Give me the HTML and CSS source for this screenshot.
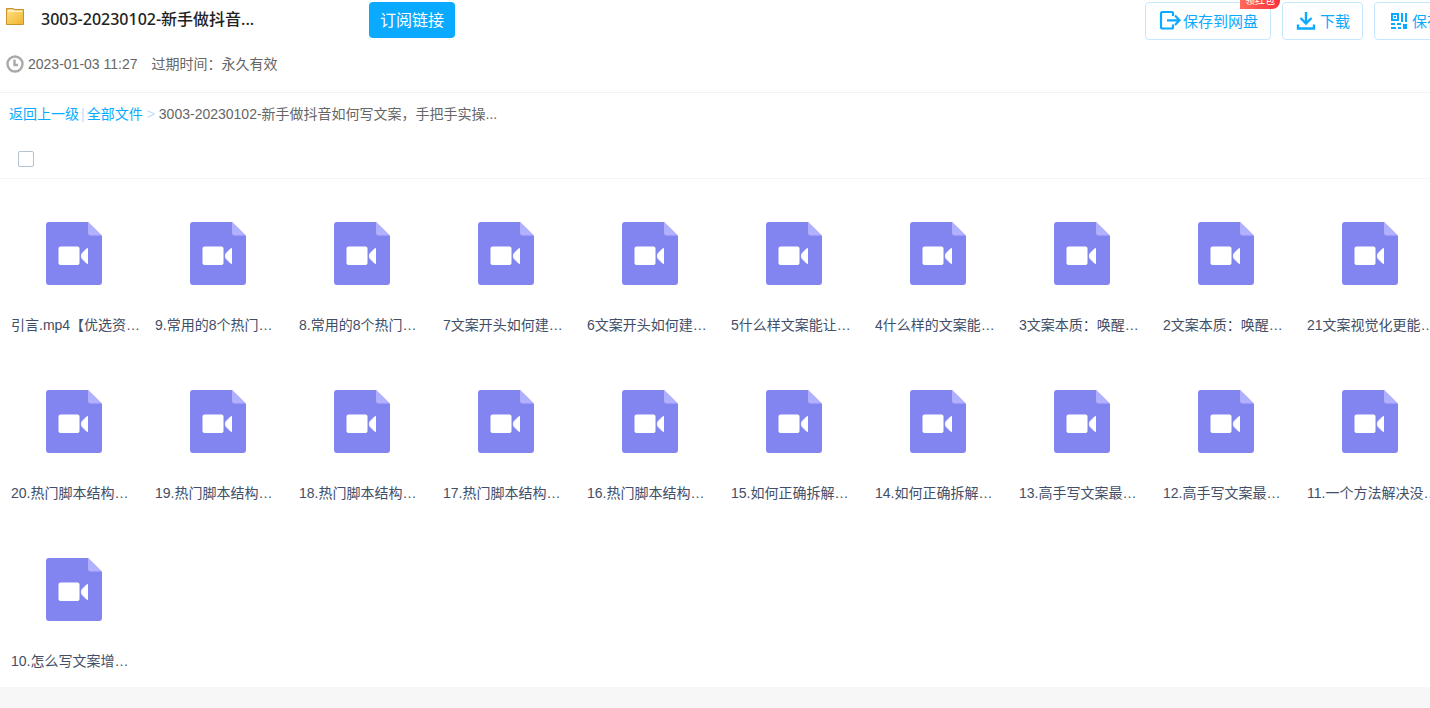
FILE: index.html
```html
<!DOCTYPE html>
<html lang="zh-CN">
<head>
<meta charset="utf-8">
<title>3003-20230102-新手做抖音</title>
<link rel="stylesheet" href="styles.css">
</head>
<body>
<svg class="defs" aria-hidden="true">
  <symbol id="video" viewBox="0 0 56 63">
    <path fill="#8284f0" d="M3 0H42L56 14V60Q56 63 53 63H3Q0 63 0 60V3Q0 0 3 0Z"/>
    <path fill="#b1b1ff" d="M42 0L56 13.500H45Q42 13.500 42 10.500Z"/>
    <rect x="12.500" y="24.500" width="21" height="18.500" rx="2" fill="#fff"/>
    <path fill="#fff" d="M42 26V42Q41 42 40 41L36 37Q35 36 35 34T36 31L40 27Q41 26 42 26Z"/>
  </symbol>
</svg>
<div class="page">
  <header class="header">
    <svg class="folder" viewBox="0 0 18 18" aria-hidden="true">
      <defs><linearGradient id="gold" x2="1" y2="1"><stop stop-color="#ffdc78"/><stop offset="1" stop-color="#f0b532"/></linearGradient></defs>
      <path d="M.5.500H7.500L8.500 1.500H17.500V16.500H.5Z" fill="#e9b545" stroke="#c8932c"/>
      <path d="M1.500 1.500H7L8 2.500H16.500V4H1.500Z" fill="#fff0c0"/>
      <path d="M1 4H17V16H1Z" fill="url(#gold)"/>
    </svg>
    <h1 class="title">3003-20230102-新手做抖音...</h1>
    <button class="subscribe" type="button">订阅链接</button>
    <div class="toolbar">
      <button class="tool" type="button">
        <svg class="tool-icon" viewBox="0 0 20 20" fill="none" stroke="#09aaff" stroke-width="2.200" aria-hidden="true"><path d="M14 6V3.500Q14 2 12.500 2H3.500Q2 2 2 3.500V17Q2 18.500 3.500 18.500H12.500Q14 18.500 14 17V14.500M8 10.300H20M16 5.500L20.500 10.300L16 15"/></svg>
        保存到网盘<span class="badge">领红包</span></button>
      <button class="tool" type="button">
        <svg class="tool-icon" viewBox="0 0 20 20" fill="none" stroke="#09aaff" stroke-width="2.400" aria-hidden="true"><path d="M10 2V13M4.500 8L10 13.500L15.500 8M2 14.500V18.500H18V14.500"/></svg>
        下载</button>
      <button class="tool" type="button">
        <svg class="tool-icon" viewBox="0 0 20 20" fill="#09aaff" aria-hidden="true"><path fill-rule="evenodd" d="M3 3H11V11H3ZM5 5V9H9V5ZM6 6H8V8H6ZM13 3H15V12H13ZM17 3H19V12H17ZM3 13H7V15H3ZM9 13H13V15H9ZM15 14H19V19H15ZM3 17H8V19H3ZM10 17H13V19H10Z"/></svg>
        保存</button>
    </div>
  </header>

  <div class="meta">
    <svg class="clock" viewBox="0 0 18 18" fill="none" stroke="#aaa" stroke-width="2.400" aria-hidden="true"><circle cx="9" cy="9" r="7.500"/><path d="M8.500 4.500V10H12"/></svg>
    <time datetime="2023-01-03T11:27">2023-01-03 11:27</time>
    <span class="expiry">过期时间：永久有效</span>
  </div>

  <nav class="crumbs">
    <a href="#">返回上一级</a><span class="sep">|</span><a href="#">全部文件</a><span class="sep arrow">&gt;</span><span>3003-20230102-新手做抖音如何写文案，手把手实操...</span>
  </nav>

  <div class="select-row"><input class="check" type="checkbox" aria-label="全选"></div>

  <ul class="files">
    <li class="file"><svg class="thumb"><use href="#video"/></svg><a class="name" href="#">引言.mp4【优选资…</a></li>
    <li class="file"><svg class="thumb"><use href="#video"/></svg><a class="name" href="#">9.常用的8个热门…</a></li>
    <li class="file"><svg class="thumb"><use href="#video"/></svg><a class="name" href="#">8.常用的8个热门…</a></li>
    <li class="file"><svg class="thumb"><use href="#video"/></svg><a class="name" href="#">7文案开头如何建…</a></li>
    <li class="file"><svg class="thumb"><use href="#video"/></svg><a class="name" href="#">6文案开头如何建…</a></li>
    <li class="file"><svg class="thumb"><use href="#video"/></svg><a class="name" href="#">5什么样文案能让…</a></li>
    <li class="file"><svg class="thumb"><use href="#video"/></svg><a class="name" href="#">4什么样的文案能…</a></li>
    <li class="file"><svg class="thumb"><use href="#video"/></svg><a class="name" href="#">3文案本质：唤醒…</a></li>
    <li class="file"><svg class="thumb"><use href="#video"/></svg><a class="name" href="#">2文案本质：唤醒…</a></li>
    <li class="file"><svg class="thumb"><use href="#video"/></svg><a class="name" href="#">21文案视觉化更能…</a></li>
    <li class="file"><svg class="thumb"><use href="#video"/></svg><a class="name" href="#">20.热门脚本结构…</a></li>
    <li class="file"><svg class="thumb"><use href="#video"/></svg><a class="name" href="#">19.热门脚本结构…</a></li>
    <li class="file"><svg class="thumb"><use href="#video"/></svg><a class="name" href="#">18.热门脚本结构…</a></li>
    <li class="file"><svg class="thumb"><use href="#video"/></svg><a class="name" href="#">17.热门脚本结构…</a></li>
    <li class="file"><svg class="thumb"><use href="#video"/></svg><a class="name" href="#">16.热门脚本结构…</a></li>
    <li class="file"><svg class="thumb"><use href="#video"/></svg><a class="name" href="#">15.如何正确拆解…</a></li>
    <li class="file"><svg class="thumb"><use href="#video"/></svg><a class="name" href="#">14.如何正确拆解…</a></li>
    <li class="file"><svg class="thumb"><use href="#video"/></svg><a class="name" href="#">13.高手写文案最…</a></li>
    <li class="file"><svg class="thumb"><use href="#video"/></svg><a class="name" href="#">12.高手写文案最…</a></li>
    <li class="file"><svg class="thumb"><use href="#video"/></svg><a class="name" href="#">11.一个方法解决没…</a></li>
    <li class="file"><svg class="thumb"><use href="#video"/></svg><a class="name" href="#">10.怎么写文案增…</a></li>
  </ul>
</div>
</body>
</html>
```
FILE: styles.css
```css
* { box-sizing: border-box; }

body {
  margin: 0;
  min-height: 100vh;
  overflow: hidden auto;
  background: #f7f7f7;
  color: #666;
  font: 14px/20px "Liberation Sans", "Noto Sans CJK SC", sans-serif;
}

a { color: #09aaff; text-decoration: none; }
button { font-family: inherit; cursor: pointer; }
.defs { display: none; }

.page {
  min-width: 1467px;
  padding-bottom: 16px;
  background: #fff;
}

.header {
  display: flex;
  align-items: flex-start;
  padding: 2px 12px 0 6px;
}

.folder { width: 18px; height: 18px; margin-top: 6px; }

.title {
  width: 328px;
  margin: 5px 0 0;
  padding-left: 17px;
  color: #222;
  font: 500 16px/24px "Noto Sans", "Noto Sans CJK SC", sans-serif;
  white-space: nowrap;
}

.subscribe {
  height: 36px;
  margin-left: 17px;
  padding: 0 11px 2px;
  border: 0;
  border-radius: 4px;
  background: #09aaff;
  color: #fff;
  font-size: 16px;
}

.toolbar {
  display: flex;
  gap: 11px;
  margin-left: auto;
}

.tool {
  position: relative;
  display: flex;
  align-items: center;
  gap: 4px;
  height: 38px;
  padding: 0 12px 2px 13px;
  border: 1px solid #c4e9ff;
  border-radius: 4px;
  background: #fff;
  color: #09aaff;
  font-size: 15px;
  white-space: nowrap;
}

.tool-icon { width: 20px; height: 20px; overflow: visible; }

.badge {
  position: absolute;
  top: -10px;
  right: -10px;
  width: 40px;
  border-radius: 8px 8px 8px 0;
  background: linear-gradient(90deg, #ff6a5a, #ff2f3c);
  color: #fff;
  font-size: 10px;
  line-height: 16px;
  text-align: center;
}

.meta {
  display: flex;
  align-items: center;
  height: 53px;
  padding: 0 6px 4px;
  border-bottom: 1px solid #f2f2f2;
}

.clock { width: 18px; height: 18px; margin-right: 4px; }
.expiry { margin-left: 14px; }

.crumbs {
  display: flex;
  height: 46px;
  padding: 11px 9px;
}

.sep { padding: 0 2px; color: #c4dbfe; }
.arrow { padding: 0 4px; }

.select-row {
  display: flex;
  height: 40px;
  padding: 12px 18px;
  border-bottom: 1px solid #f2f6fa;
}

.check {
  appearance: none;
  width: 16px;
  height: 16px;
  margin: 0;
  border: 1px solid #b4c1d2;
  border-radius: 2px;
  background: #fff;
}

.files {
  display: grid;
  grid-template-columns: repeat(10, 144px);
  row-gap: 55px;
  margin: 0;
  padding: 43px 0 0 2px;
  list-style: none;
}

.file { display: flex; flex-direction: column; gap: 30px; }
.thumb { width: 56px; height: 63px; margin-left: 44px; }

.name {
  padding-left: 9px;
  color: #424e67;
  white-space: nowrap;
}
```
